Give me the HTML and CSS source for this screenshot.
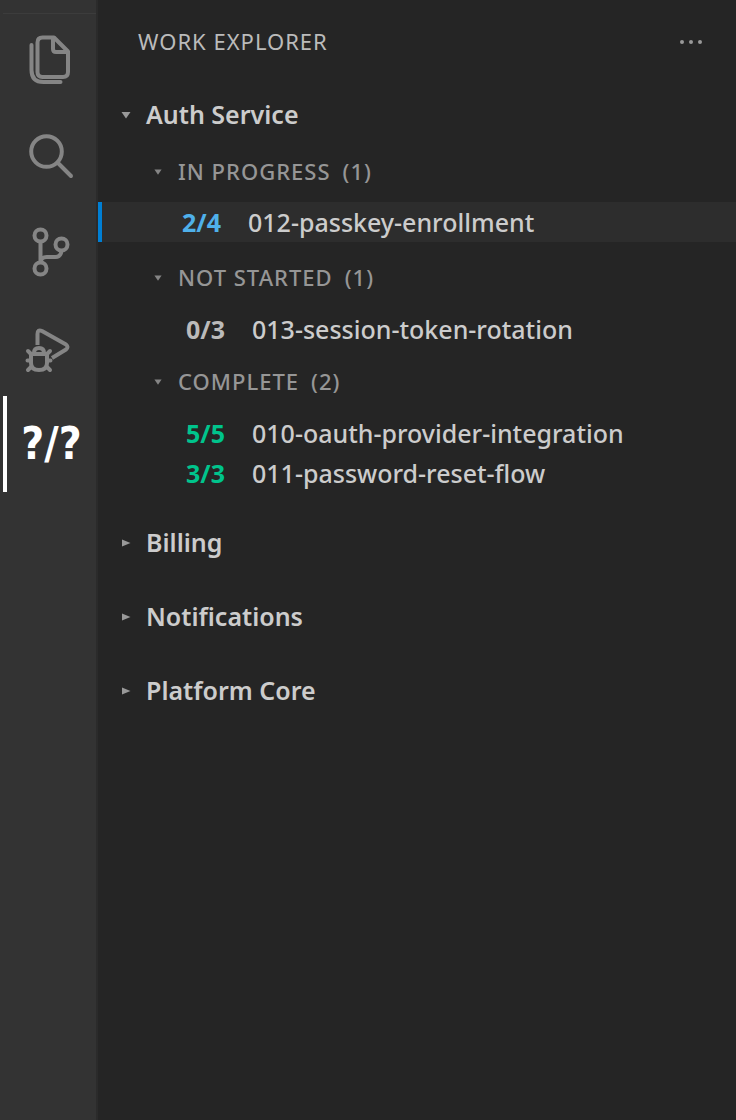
FILE: index.html
```html
<!DOCTYPE html>
<html lang="en">
<head>
<meta charset="utf-8">
<meta name="viewport" content="width=device-width, initial-scale=1">
<title>Work Explorer</title>
<link rel="stylesheet" href="styles.css">
</head>
<body>
<div class="app">
  <nav class="activity-bar" aria-label="Activity bar">
    <button class="activity" type="button" aria-label="Files">
      <svg viewBox="0 0 96 96" fill="none" stroke="currentColor" stroke-width="4" stroke-linejoin="round" stroke-linecap="round">
        <path d="M42.500 25.500H54l14 14V60q0 5-5 5H42.500q-5 0-5-5V30.500q0-5 5-5z"/>
        <path d="M53 26v11q0 3 3 3h11"/>
        <path d="M31.500 33v25q0 12 12 12h17"/>
      </svg>
    </button>
    <button class="activity" type="button" aria-label="Search">
      <svg viewBox="0 0 96 96" fill="none" stroke="currentColor" stroke-width="4" stroke-linecap="round">
        <circle cx="46.500" cy="43.500" r="15.300"/>
        <path d="M58 55l13 13"/>
      </svg>
    </button>
    <button class="activity" type="button" aria-label="Source control">
      <svg viewBox="0 0 96 96" fill="none" stroke="currentColor" stroke-width="4" stroke-linecap="round">
        <circle cx="40.500" cy="31.500" r="6"/>
        <circle cx="61.500" cy="40.500" r="6"/>
        <circle cx="40.500" cy="64.500" r="6"/>
        <path d="M40.500 38v20M61.500 47q-1 6-6 6h-9q-5 0-6 5"/>
      </svg>
    </button>
    <button class="activity" type="button" aria-label="Run and debug">
      <svg viewBox="0 0 96 96" fill="none" stroke="currentColor" stroke-width="4" stroke-linecap="round" stroke-linejoin="round">
        <path stroke-linecap="butt" d="M37.500 45V34q0-5 4.500-3l24 13.500q3 2.500 0 5L52 58"/>
        <path d="M31 54h16v9q0 7-8 7t-8-7z"/>
        <path d="M34 53q0-5 5-5t5 5M28 51l3 3M50 51l-3 3M27.500 60.500H31M47 60.500h3.500M31 67l-3 3M47 67l3 3"/>
      </svg>
    </button>
    <button class="activity activity--current" type="button" aria-label="Work explorer" aria-current="page">
      <span class="activity__mark">?/?</span>
    </button>
  </nav>

  <main class="explorer">
    <header class="explorer__header">
      <h1 class="explorer__title">WORK EXPLORER</h1>
      <button class="more" type="button" aria-label="More actions">
        <svg viewBox="0 0 24 6" fill="currentColor"><circle cx="3" cy="3" r="2"/><circle cx="12" cy="3" r="2"/><circle cx="21" cy="3" r="2"/></svg>
      </button>
    </header>

    <section>
      <button class="project" type="button" aria-expanded="true">
        <svg class="arrow" viewBox="0 0 10 10"><path d="M.5 2h9L5 8.500z"/></svg><span>Auth Service</span>
      </button>
      <section class="group group--current">
        <button class="status" type="button" aria-expanded="true">
          <svg class="arrow arrow--small" viewBox="0 0 10 10"><path d="M.5 2h9L5 8.500z"/></svg>
          <span>IN PROGRESS</span><span>(1)</span>
        </button>
        <ul class="items">
          <li><button class="item item--selected" type="button"><span class="count count--active">2/4</span><span>012-passkey-enrollment</span></button></li>
        </ul>
      </section>
      <section class="group">
        <button class="status" type="button" aria-expanded="true">
          <svg class="arrow arrow--small" viewBox="0 0 10 10"><path d="M.5 2h9L5 8.500z"/></svg>
          <span>NOT STARTED</span><span>(1)</span>
        </button>
        <ul class="items">
          <li><button class="item" type="button"><span class="count">0/3</span><span>013-session-token-rotation</span></button></li>
        </ul>
      </section>
      <section class="group">
        <button class="status" type="button" aria-expanded="true">
          <svg class="arrow arrow--small" viewBox="0 0 10 10"><path d="M.5 2h9L5 8.500z"/></svg>
          <span>COMPLETE</span><span>(2)</span>
        </button>
        <ul class="items">
          <li><button class="item" type="button"><span class="count count--done">5/5</span><span>010-oauth-provider-integration</span></button></li>
          <li><button class="item" type="button"><span class="count count--done">3/3</span><span>011-password-reset-flow</span></button></li>
        </ul>
      </section>
    </section>
    <button class="project" type="button" aria-expanded="false">
      <svg class="arrow" viewBox="0 0 10 10"><path d="M1 1.500L9.500 5 1 8.500z"/></svg><span>Billing</span>
    </button>
    <button class="project" type="button" aria-expanded="false">
      <svg class="arrow" viewBox="0 0 10 10"><path d="M1 1.500L9.500 5 1 8.500z"/></svg><span>Notifications</span>
    </button>
    <button class="project" type="button" aria-expanded="false">
      <svg class="arrow" viewBox="0 0 10 10"><path d="M1 1.500L9.500 5 1 8.500z"/></svg><span>Platform Core</span>
    </button>
  </main>
</div>
</body>
</html>
```
FILE: styles.css
```css
* {
  box-sizing: border-box;
}

body {
  margin: 0;
  background: #252525;
  color: #cccccc;
  font-family: "Noto Sans", "Open Sans", sans-serif;
}

button {
  margin: 0;
  padding: 0;
  border: 0;
  background: none;
  color: inherit;
  font: inherit;
  text-align: left;
  cursor: pointer;
}

.app {
  display: flex;
  min-height: 100vh;
}

.activity-bar {
  flex: none;
  width: 98px;
  padding-top: 12px;
  border-right: 2px solid #2b2b2b;
  background: linear-gradient(#3c3c3c, #3c3c3c) 3px 13px / 100% 1px no-repeat #333333;
}

.activity {
  display: flex;
  align-items: center;
  justify-content: center;
  width: 100%;
  height: 96px;
  color: #858585;
}

.activity svg {
  width: 96px;
  height: 96px;
}

.activity--current {
  width: auto;
  min-width: 93px;
  margin-left: 3px;
  border-left: 4px solid #ffffff;
  color: #ffffff;
}

.activity__mark {
  font-family: "Liberation Sans Narrow", "DejaVu Sans Condensed", sans-serif;
  font-size: 44px;
  font-weight: 700;
  line-height: 1;
}

.explorer {
  flex: 1;
  min-width: 0;
}

.explorer__header {
  display: flex;
  align-items: center;
  justify-content: space-between;
  height: 78px;
  padding: 6px 33px 0 40px;
}

.explorer__title {
  margin: 0;
  padding-bottom: 2px;
  color: #bbbbbb;
  font-size: 22px;
  font-weight: 400;
  letter-spacing: 1px;
}

.more {
  display: flex;
  color: #999999;
}

.more svg {
  width: 24px;
  height: 6px;
}

.project {
  display: flex;
  align-items: center;
  gap: 15px;
  width: 100%;
  height: 74px;
  padding-left: 23px;
  font-size: 25px;
  font-weight: 600;
}

.project span,
.status span {
  padding-bottom: 2px;
}

.arrow {
  flex: none;
  width: 10px;
  height: 10px;
  fill: #999999;
}

.arrow--small {
  width: 8px;
  height: 8px;
  fill: #858585;
}

.status {
  display: flex;
  align-items: center;
  gap: 12px;
  width: 100%;
  height: 40px;
  padding-left: 56px;
  color: #969696;
  font-size: 22px;
  font-weight: 500;
  letter-spacing: 1px;
}

.status .arrow {
  margin-right: 4px;
}

.items {
  margin: 0;
  padding: 11px 0 13px;
  list-style: none;
}

.group--current .items {
  padding: 10px 0 16px;
}

.item {
  display: flex;
  align-items: center;
  width: 100%;
  height: 40px;
  padding-left: 88px;
  font-size: 25px;
  font-weight: 500;
  white-space: nowrap;
}

.item--selected {
  padding-left: 80px;
  border-left: 4px solid #007fd4;
  background: #2d2d2d;
}

.count {
  flex: none;
  width: 66px;
  color: #bbbbbb;
  font-weight: 700;
}

.count--active {
  color: #4fb0ea;
}

.count--done {
  color: #00c48c;
}
```
